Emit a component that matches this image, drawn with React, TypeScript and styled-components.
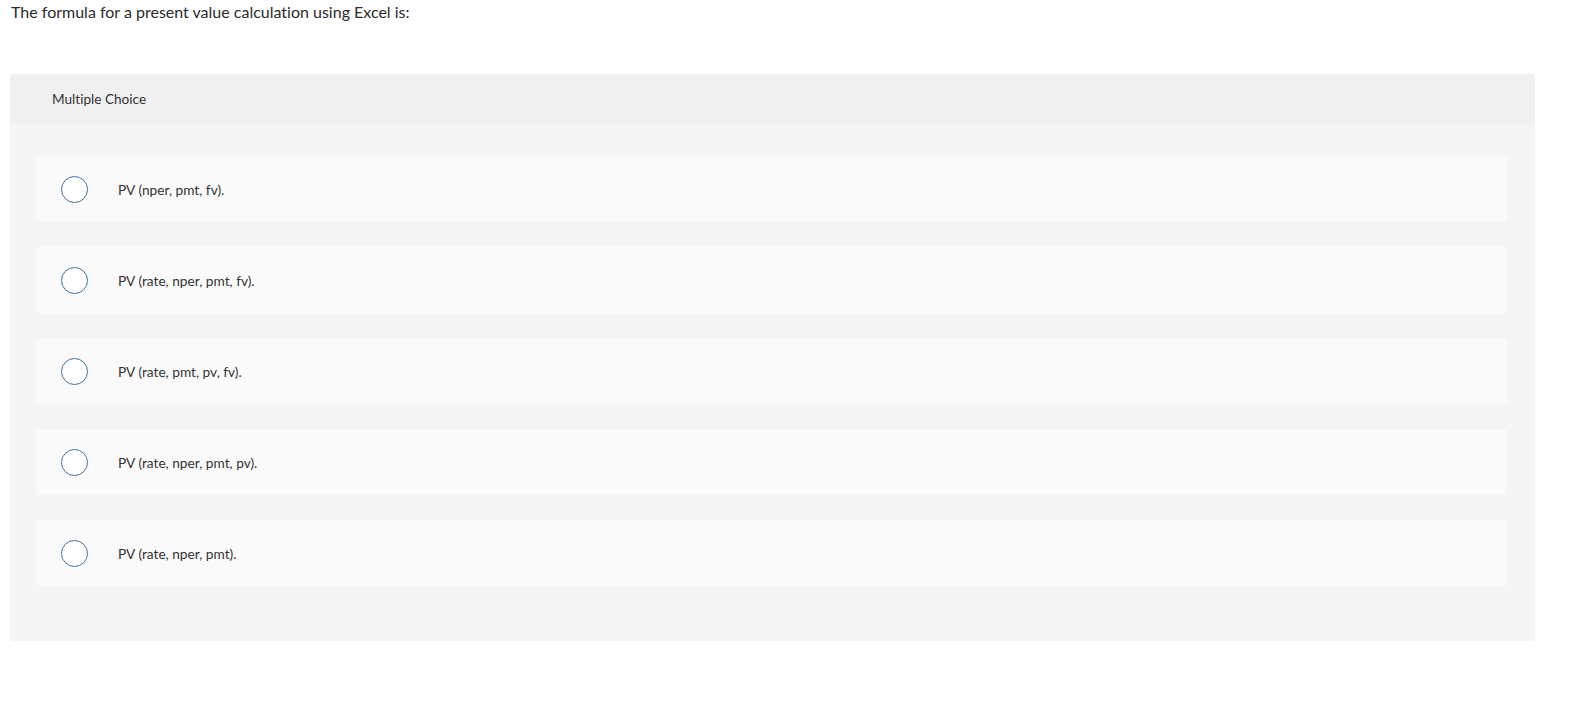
import React from "react";
import styled, { createGlobalStyle } from "styled-components";

const Global = createGlobalStyle`
  html, body { margin: 0; padding: 0; background: #fff; }
  body {
    font-family: Lato, "Liberation Sans", Arial, sans-serif;
    color: #333;
    font-variant-ligatures: none;
  }
`;

const Page = styled.div`
  padding: 0 49px 0 10px;
`;

const Question = styled.p`
  margin: 0;
  padding-top: 2px;
  height: 72px;
  font-size: 16px;
  line-height: 19px;
  color: #2b2b2b;
  padding-left: 1px;
`;

const Panel = styled.section`
  width: 1525px;
  border-radius: 3px;
  overflow: hidden;
  background: #f5f5f5;
`;

const Header = styled.div`
  height: 50px;
  display: flex;
  align-items: center;
  padding-left: 42px;
  background: #f0f0f0;
  font-size: 13.6px;
  color: #333;
`;

const Options = styled.div`
  display: flex;
  flex-direction: column;
  gap: 25px;
  padding: 32px 28px 55px 26px;
`;

const Option = styled.label`
  height: 66px;
  display: flex;
  align-items: center;
  background: #fafafa;
  border-radius: 4px;
  padding-left: 25px;
  cursor: pointer;
`;

const Radio = styled.span`
  width: 25px;
  height: 25px;
  border-radius: 50%;
  border: 1.5px solid #416e9c;
  background: #fff;
  flex-shrink: 0;
`;

const OptionText = styled.span`
  margin-left: 30px;
  font-size: 13.7px;
  color: #333;
`;

const choices = [
  "PV (nper, pmt, fv).",
  "PV (rate, nper, pmt, fv).",
  "PV (rate, pmt, pv, fv).",
  "PV (rate, nper, pmt, pv).",
  "PV (rate, nper, pmt).",
];

export default function App() {
  return (
    <>
      <Global />
      <Page>
        <Question>The formula for a present value calculation using Excel is:</Question>
        <Panel>
          <Header>Multiple Choice</Header>
          <Options>
            {choices.map((c) => (
              <Option key={c}>
                <Radio />
                <OptionText>{c}</OptionText>
              </Option>
            ))}
          </Options>
        </Panel>
      </Page>
    </>
  );
}
